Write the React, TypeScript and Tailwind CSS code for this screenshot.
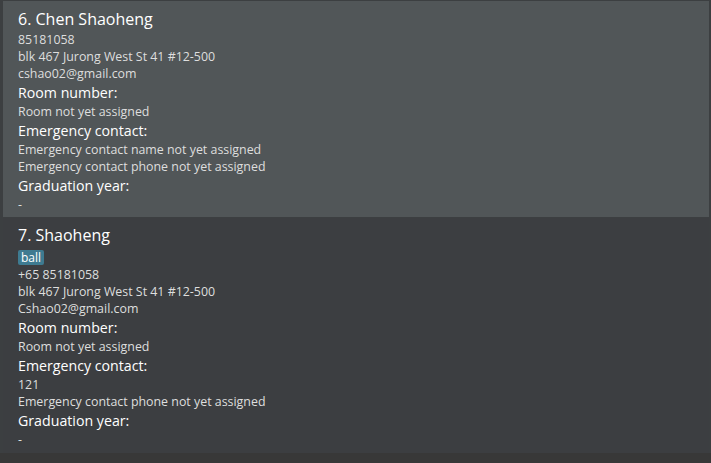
import React from "react";

type Person = {
  idx: number;
  name: string;
  tags: string[];
  phone: string;
  address: string;
  email: string;
  room: string;
  ecName: string;
  ecPhone: string;
  grad: string;
};

const people: Person[] = [
  {
    idx: 6,
    name: "Chen Shaoheng",
    tags: [],
    phone: "85181058",
    address: "blk 467 Jurong West St 41 #12-500",
    email: "cshao02@gmail.com",
    room: "Room not yet assigned",
    ecName: "Emergency contact name not yet assigned",
    ecPhone: "Emergency contact phone not yet assigned",
    grad: "-",
  },
  {
    idx: 7,
    name: "Shaoheng",
    tags: ["ball"],
    phone: "+65 85181058",
    address: "blk 467 Jurong West St 41 #12-500",
    email: "Cshao02@gmail.com",
    room: "Room not yet assigned",
    ecName: "121",
    ecPhone: "Emergency contact phone not yet assigned",
    grad: "-",
  },
];

const font = { fontFamily: '"Open Sans", "Noto Sans", sans-serif' };

function Detail({ children }: { children: React.ReactNode }) {
  return <div className="h-[17px] leading-[17px] text-[12.4px] text-[#dedede] whitespace-nowrap">{children}</div>;
}

function Label({ children }: { children: React.ReactNode }) {
  return <div className="h-[21px] leading-[21px] text-[14.2px] text-white whitespace-nowrap">{children}</div>;
}

function Card({ p, selected }: { p: Person; selected: boolean }) {
  return (
    <div className={`${selected ? "bg-[#515658] h-[216px] pt-[7px]" : "bg-[#3c3e41] h-[235px] pt-[6px]"} pl-[15px] flex flex-col`}>
      <div className="h-[23px] leading-[23px] text-[16px] text-white whitespace-nowrap">
        {p.idx}. {p.name}
      </div>
      {p.tags.length > 0 && (
        <div className="h-[19px] flex items-center gap-1 pt-[1px]">
          {p.tags.map((t) => (
            <span key={t} className="bg-[#3e7b91] text-white text-[12px] leading-[15px] h-[15px] px-[3px] rounded-[2px]">
              {t}
            </span>
          ))}
        </div>
      )}
      <Detail>{p.phone}</Detail>
      <Detail>{p.address}</Detail>
      <Detail>{p.email}</Detail>
      <Label>Room number:</Label>
      <Detail>{p.room}</Detail>
      <Label>Emergency contact:</Label>
      <Detail>{p.ecName}</Detail>
      <Detail>{p.ecPhone}</Detail>
      <Label>Graduation year:</Label>
      <Detail>{p.grad}</Detail>
    </div>
  );
}

export default function App() {
  return (
    <div className="w-[711px] h-[463px] bg-[#383838] overflow-hidden" style={font}>
      <div className="bg-[#3c3f41] pt-[1px] pl-[3px] pr-[2px] flex flex-col gap-[1px]">
        <Card p={people[0]} selected={true} />
        <Card p={people[1]} selected={false} />
      </div>
    </div>
  );
}
